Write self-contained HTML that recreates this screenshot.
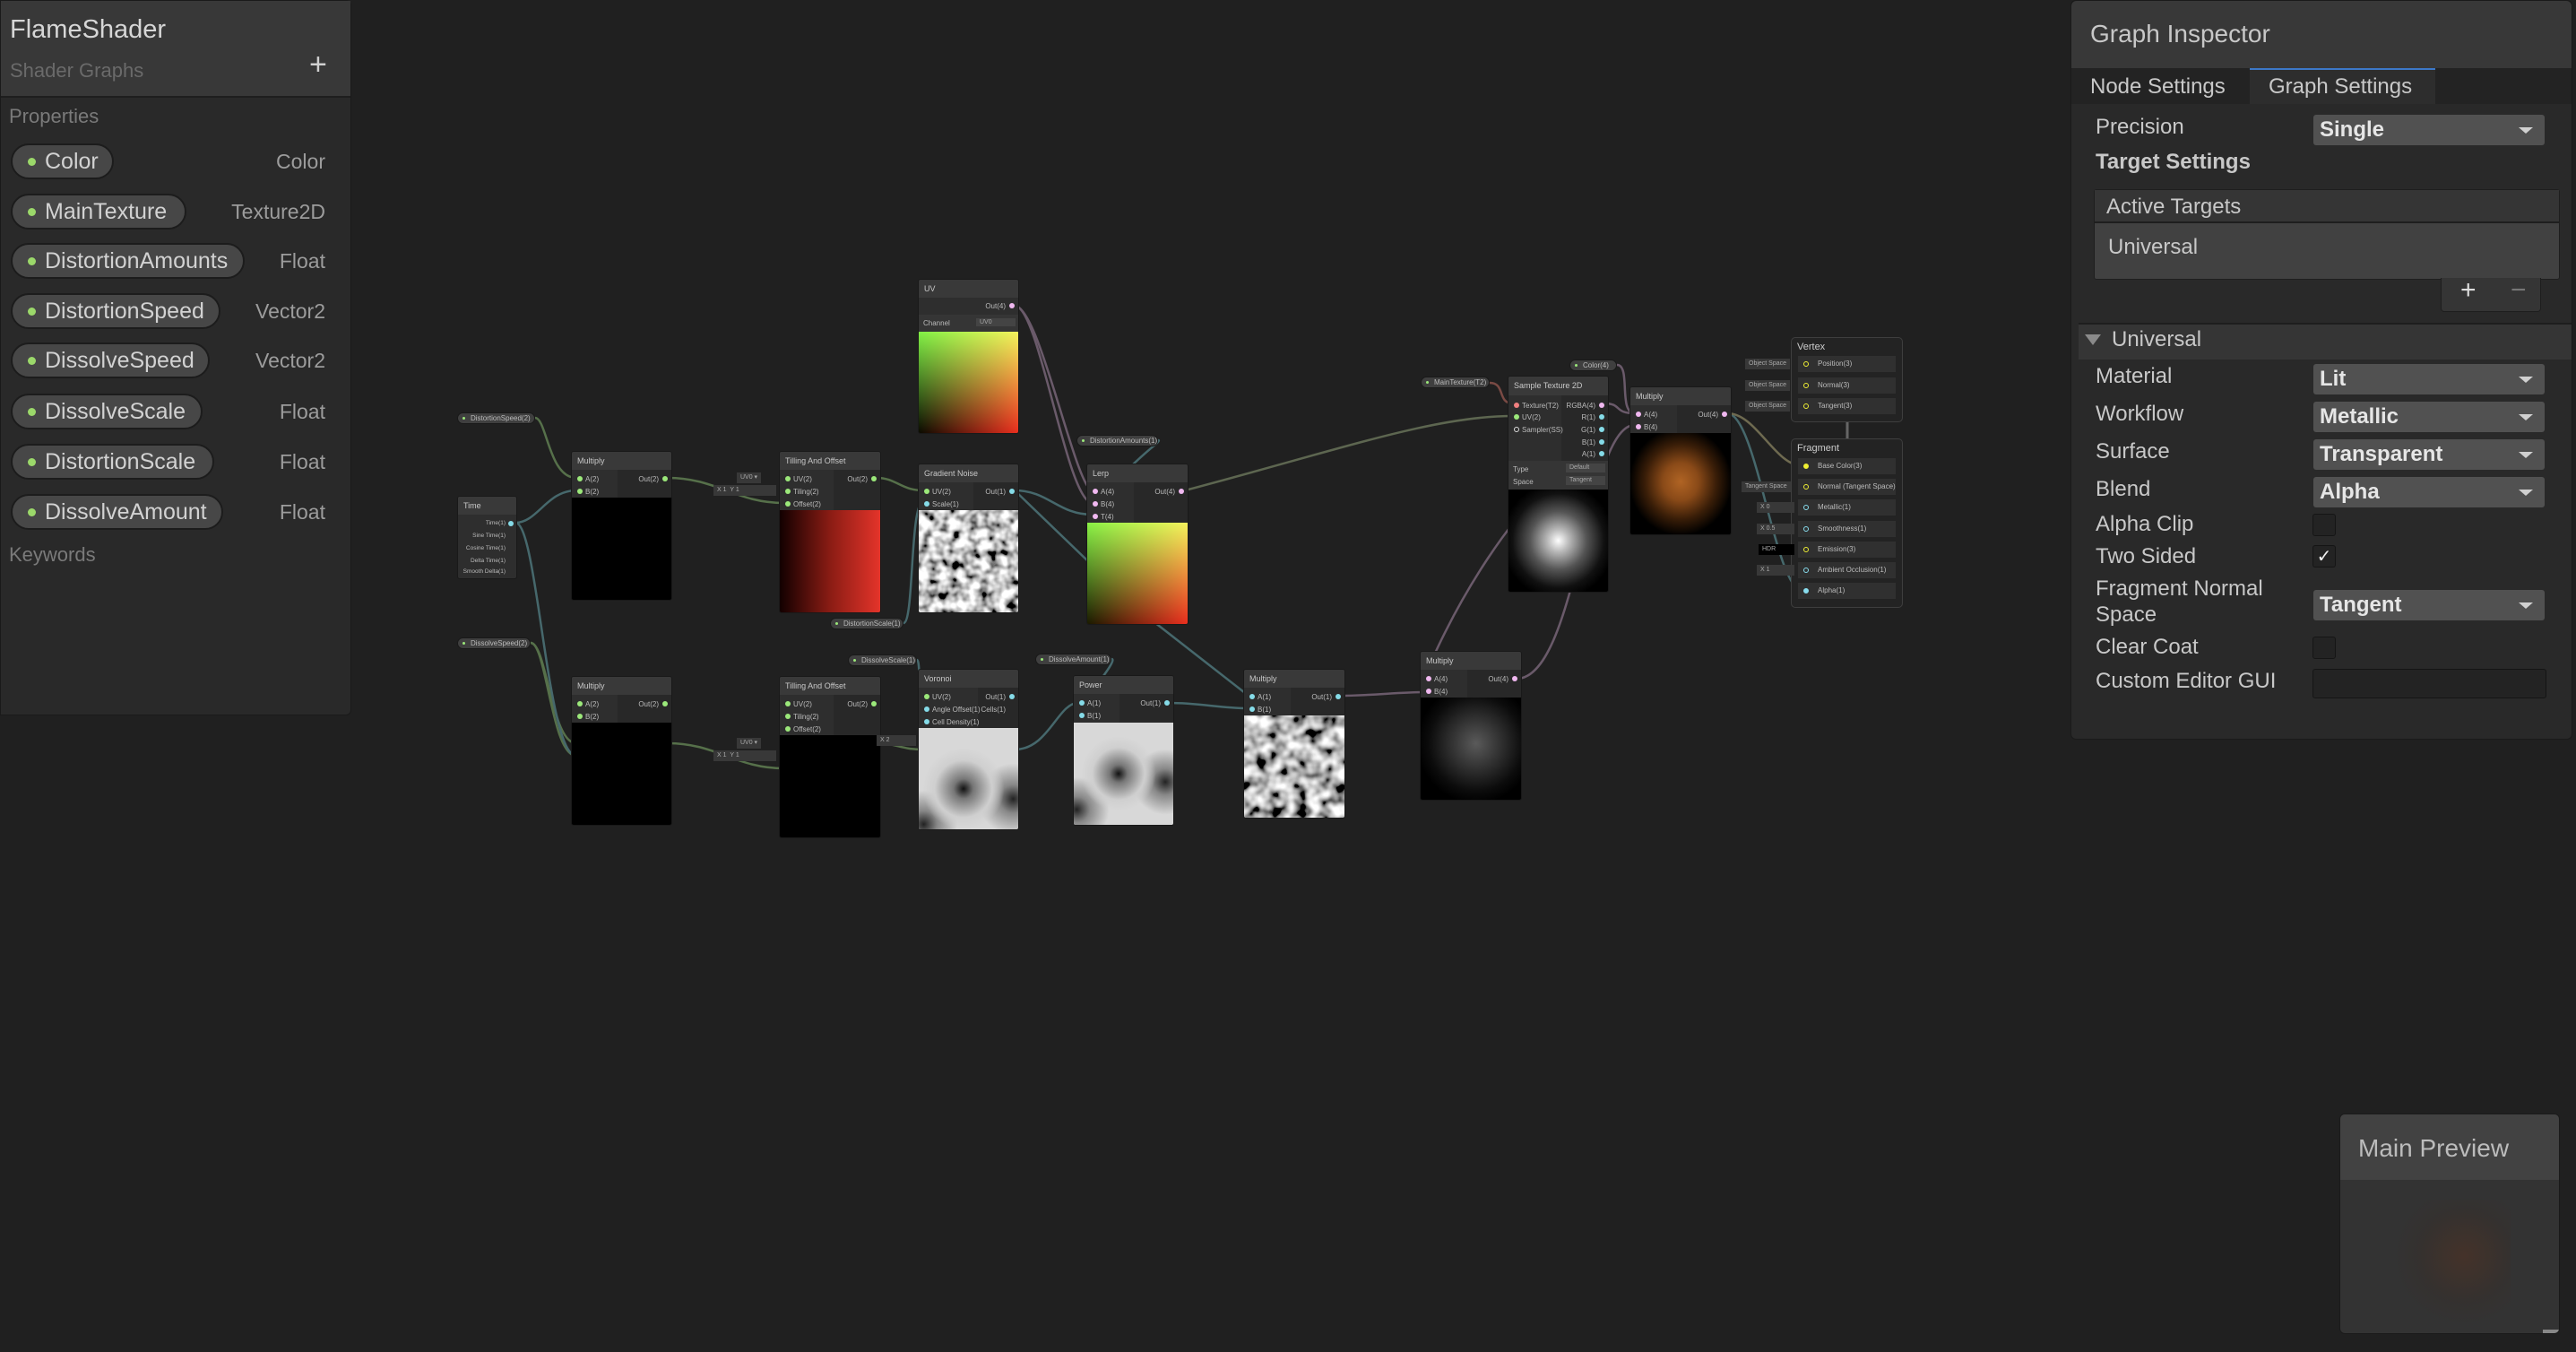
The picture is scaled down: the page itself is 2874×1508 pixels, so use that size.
<!DOCTYPE html>
<html><head><meta charset="utf-8">
<style>
*{margin:0;padding:0;box-sizing:border-box}
body{width:2874px;height:1508px;background:#202020;font-family:"Liberation Sans",sans-serif;position:relative;overflow:hidden;color:#c4c4c4}
.a{position:absolute}
#lp{left:0;top:0;width:392px;height:798px;background:#292929;border:1px solid #1a1a1a;border-radius:0 6px 6px 0}
#lp .hd{left:0;top:0;width:390px;height:108px;background:#383838;border-bottom:2px solid #1e1e1e}
.pill{position:absolute;left:11px;height:40px;border-radius:20px;background:#474747;border:2px solid #1c1c1c;font-size:25px;color:#d2d2d2;line-height:36px;padding-left:36px}
.pill:before{content:"";position:absolute;left:17px;top:14px;width:9px;height:9px;border-radius:50%;background:#9bd86a}
.ty{position:absolute;right:28px;font-size:23px;color:#9c9c9c;line-height:40px}
#rp{left:2310px;top:0;width:560px;height:825px;background:#292929;border:1px solid #1a1a1a;border-radius:6px}
.lbl{position:absolute;left:27px;font-size:24px;color:#c8c8c8}
.dd{position:absolute;left:270px;width:258px;height:34px;background:#515151;border-radius:3px;font-size:24px;font-weight:bold;color:#e6e6e6;padding-left:7px;line-height:34px}
.dd:after{content:"";position:absolute;right:13px;top:14px;border-left:8px solid transparent;border-right:8px solid transparent;border-top:7px solid #d0d0d0}
.cb{position:absolute;left:269px;width:26px;height:25px;background:#232323;border:1px solid #151515;border-radius:3px}
.n{position:absolute;background:#2e2e2e;border:1px solid #191919;border-radius:3px;overflow:hidden;font-size:8px;color:#bdbdbd}
.n .h{position:absolute;left:0;top:0;right:0;background:#393939;padding:5px 0 0 6px;font-size:9px;color:#c8c8c8}
.n .pr{position:absolute;right:0;background:#282828}
.n .pv{position:absolute;left:0;right:0;bottom:0;background:#000}
.pt{position:absolute;font-size:8px;color:#bbb;white-space:nowrap}
.d{position:absolute;width:6px;height:6px;border-radius:50%}
.g{background:#9be87a}.b{background:#85dbe8}.p{background:#f0b8f0}.r{background:#f08080}.y{background:#f2f07a}
.gp{position:absolute;height:13px;border-radius:7px;background:#3f3f3f;border:1px solid #191919;font-size:8px;color:#bbb;line-height:11px;padding-left:14px;white-space:nowrap}
.gp:before{content:"";position:absolute;left:5px;top:4px;width:3px;height:3px;border-radius:50%;background:#9be87a}
.mb{position:absolute;border:1px solid #3e3e3e;border-radius:5px;background:#232323}
.row{position:absolute;left:7px;width:109px;height:18px;background:#303030;font-size:8px;color:#bbb;padding-left:22px;line-height:18px}
.row i{position:absolute;left:6px;top:6px;width:6px;height:6px;border-radius:50%;border:1.5px solid #ee3}
.chip{position:absolute;height:12px;background:#383838;font-size:7px;color:#aaa;line-height:12px;padding:0 4px;white-space:nowrap}
</style></head><body>

<div id="lp" class="a">
<div class="a hd"></div>
<div class="a" style="left:10px;top:16px;font-size:29px;color:#d6d6d6">FlameShader</div>
<div class="a" style="left:10px;top:65px;font-size:22px;color:#6a6a6a">Shader Graphs</div>
<div class="a" style="left:344px;top:52px;font-size:34px;color:#d0d0d0">+</div>
<div class="a" style="left:9px;top:116px;font-size:22px;color:#7a7a7a">Properties</div>
<div class="pill" style="top:159px;width:115px">Color</div><div class="ty" style="top:159px">Color</div>
<div class="pill" style="top:215px;width:196px">MainTexture</div><div class="ty" style="top:215px">Texture2D</div>
<div class="pill" style="top:270px;width:261px">DistortionAmounts</div><div class="ty" style="top:270px">Float</div>
<div class="pill" style="top:326px;width:234px">DistortionSpeed</div><div class="ty" style="top:326px">Vector2</div>
<div class="pill" style="top:381px;width:222px">DissolveSpeed</div><div class="ty" style="top:381px">Vector2</div>
<div class="pill" style="top:438px;width:214px">DissolveScale</div><div class="ty" style="top:438px">Float</div>
<div class="pill" style="top:494px;width:227px">DistortionScale</div><div class="ty" style="top:494px">Float</div>
<div class="pill" style="top:550px;width:237px">DissolveAmount</div><div class="ty" style="top:550px">Float</div>
<div class="a" style="left:9px;top:605px;font-size:22px;color:#7a7a7a">Keywords</div>
</div>

<div id="rp" class="a">
<div class="a" style="left:0;top:0;width:558px;height:75px;background:#383838;border-radius:6px 6px 0 0"></div>
<div class="a" style="left:21px;top:21px;font-size:28px;color:#c8c8c8">Graph Inspector</div>
<div class="a" style="left:0;top:75px;width:558px;height:40px;background:#232323"></div>
<div class="a" style="left:199px;top:75px;width:207px;height:40px;background:#2d2d2d;border-top:2px solid #3c78c8"></div>
<div class="a" style="left:21px;top:82px;font-size:24px;color:#c8c8c8">Node Settings</div>
<div class="a" style="left:220px;top:82px;font-size:24px;color:#c8c8c8">Graph Settings</div>
<div class="lbl" style="top:127px">Precision</div><div class="dd" style="top:127px">Single</div>
<div class="lbl" style="top:166px;font-weight:bold">Target Settings</div>
<div class="a" style="left:25px;top:210px;width:520px;height:101px;background:#414141;border:1px solid #1e1e1e;border-radius:3px"></div>
<div class="a" style="left:26px;top:211px;width:518px;height:37px;background:#353535;border-bottom:2px solid #1e1e1e"></div>
<div class="a" style="left:39px;top:216px;font-size:24px;color:#c8c8c8">Active Targets</div>
<div class="a" style="left:41px;top:261px;font-size:24px;color:#c8c8c8">Universal</div>
<div class="a" style="left:412px;top:309px;width:112px;height:38px;background:#353535;border:1px solid #1e1e1e;border-top:none;border-radius:0 0 4px 4px"></div>
<div class="a" style="left:434px;top:306px;font-size:30px;color:#ddd">+</div>
<div class="a" style="left:490px;top:306px;font-size:30px;color:#777">−</div>
<div class="a" style="left:8px;top:359px;width:550px;height:41px;background:#353535;border-top:2px solid #1e1e1e"></div>
<div class="a" style="left:15px;top:372px;border-left:9px solid transparent;border-right:9px solid transparent;border-top:12px solid #8a8a8a"></div>
<div class="a" style="left:45px;top:364px;font-size:24px;color:#c8c8c8">Universal</div>
<div class="lbl" style="top:405px">Material</div><div class="dd" style="top:405px">Lit</div>
<div class="lbl" style="top:447px">Workflow</div><div class="dd" style="top:447px">Metallic</div>
<div class="lbl" style="top:489px">Surface</div><div class="dd" style="top:489px">Transparent</div>
<div class="lbl" style="top:531px">Blend</div><div class="dd" style="top:531px">Alpha</div>
<div class="lbl" style="top:570px">Alpha Clip</div><div class="cb" style="top:572px"></div>
<div class="lbl" style="top:606px">Two Sided</div><div class="cb" style="top:607px;color:#eee;font-size:20px;text-align:center;line-height:24px">✓</div>
<div class="lbl" style="top:641px;line-height:29px">Fragment Normal<br>Space</div><div class="dd" style="top:657px">Tangent</div>
<div class="lbl" style="top:707px">Clear Coat</div><div class="cb" style="top:709px"></div>
<div class="lbl" style="top:745px">Custom Editor GUI</div>
<div class="a" style="left:269px;top:745px;width:261px;height:33px;background:#232323;border:1px solid #151515;border-radius:3px"></div>
</div>

<div class="a" style="left:2610px;top:1242px;width:246px;height:246px;background:#333;border:1px solid #1a1a1a;border-radius:6px;overflow:hidden">
<div class="a" style="left:0;top:0;width:246px;height:73px;background:#424242"></div>
<div class="a" style="left:20px;top:22px;font-size:28px;color:#bcbcbc">Main Preview</div>
<div class="a" style="left:60px;top:95px;width:130px;height:140px;background:radial-gradient(ellipse at 60% 45%,rgba(90,50,30,.45),rgba(60,40,30,.2) 45%,rgba(51,51,51,0) 70%)"></div>
<div class="a" style="left:226px;top:240px;width:20px;height:5px;background:#888"></div>
</div>

<svg class="a" style="left:0;top:0" width="2874" height="1508" fill="none" stroke-width="2.5">
<defs>
<filter id="gn" x="0" y="0" width="100%" height="100%"><feTurbulence type="fractalNoise" baseFrequency="0.09" numOctaves="2" seed="3"/><feColorMatrix type="matrix" values="2.6 0 0 0 -0.75 2.6 0 0 0 -0.75 2.6 0 0 0 -0.75 0 0 0 0 1"/></filter>
<filter id="gn2" x="0" y="0" width="100%" height="100%"><feTurbulence type="fractalNoise" baseFrequency="0.07" numOctaves="2" seed="8"/><feColorMatrix type="matrix" values="2.3 0 0 0 -0.65 2.3 0 0 0 -0.65 2.3 0 0 0 -0.65 0 0 0 0 1"/></filter>
</defs>
<g stroke="#56704a">
<path d="M597 466 C610 466,612 533,643 533"/>
<path d="M592 717 C610 717,615 829,643 829"/>
<path d="M592 717 C610 717,615 843,643 843"/>
<path d="M745 533 C800 533,820 561,875 561"/>
<path d="M978 533 C1000 533,1005 547,1030 547"/>
<path d="M745 829 C800 829,820 857,875 857"/>
<path d="M978 829 C1000 829,1005 836,1030 836"/>
<path d="M1322 547 C1500 500,1600 464,1688 464" stroke="#5d6650"/>
</g>
<g stroke="#46686c">
<path d="M575 583 C600 583,610 547,643 547"/>
<path d="M575 583 C600 583,610 843,643 843"/>
<path d="M1008 695 C1020 695,1015 560,1030 560"/>
<path d="M1023 736 C1030 736,1020 864,1030 864"/>
<path d="M1132 547 C1170 547,1180 574,1219 574"/>
<path d="M1132 547 L1270 680 L1393 776"/>
<path d="M1292 491 C1300 491,1250 520,1219 574"/>
<path d="M1132 836 C1170 836,1180 784,1203 784"/>
<path d="M1240 735 C1250 735,1200 790,1203 798"/>
<path d="M1304 784 C1340 784,1360 790,1393 790"/>
<path d="M1927 461 C1960 461,1980 660,2012 660"/>
</g>
<g stroke="#6a5a6a">
<path d="M1132 341 C1160 341,1200 547,1219 547"/>
<path d="M1132 341 C1160 341,1190 561,1219 561"/>
<path d="M1494 776 C1530 776,1560 772,1590 772"/>
<path d="M1790 450 C1810 450,1800 461,1824 461"/>
<path d="M1804 407 C1820 407,1805 461,1824 461"/>
<path d="M1692 757 C1760 757,1770 474,1824 474"/>
<path d="M1790 505 C1700 520,1600 720,1590 757"/>
<path d="M1927 461 C1960 461,1980 520,2012 520" stroke="#6e6a50"/>
</g>
<path d="M1662 427 C1680 427,1670 450,1688 450" stroke="#7a4a44"/>
<path d="M2061 471 L2061 489" stroke="#666" stroke-width="3"/>
</svg>

<div class="gp" style="left:510px;top:460px;width:87px">DistortionSpeed(2)</div>
<div class="gp" style="left:510px;top:711px;width:82px">DissolveSpeed(2)</div>
<div class="gp" style="left:926px;top:689px;width:82px">DistortionScale(1)</div>
<div class="gp" style="left:946px;top:730px;width:77px">DissolveScale(1)</div>
<div class="gp" style="left:1155px;top:729px;width:85px">DissolveAmount(1)</div>
<div class="gp" style="left:1201px;top:485px;width:91px">DistortionAmounts(1)</div>
<div class="gp" style="left:1585px;top:420px;width:77px">MainTexture(T2)</div>
<div class="gp" style="left:1751px;top:401px;width:53px">Color(4)</div>

<div class="n" style="left:510px;top:553px;width:67px;height:93px"><div class="h" style="height:20px">Time</div>
<div class="pt" style="right:12px;top:26px;font-size:6.5px">Time(1)</div><div class="pt" style="right:12px;top:40px;font-size:6.5px">Sine Time(1)</div><div class="pt" style="right:12px;top:54px;font-size:6.5px">Cosine Time(1)</div><div class="pt" style="right:12px;top:68px;font-size:6.5px">Delta Time(1)</div><div class="pt" style="right:12px;top:80px;font-size:6.5px">Smooth Delta(1)</div>
<div class="d b" style="right:3px;top:27px"></div></div>

<div class="n" style="left:637px;top:503px;width:113px;height:167px"><div class="h" style="height:20px">Multiply</div><div class="pr" style="top:20px;height:33px;width:60px"></div>
<div class="d g" style="left:6px;top:27px"></div><div class="pt" style="left:15px;top:26px">A(2)</div><div class="d g" style="left:6px;top:41px"></div><div class="pt" style="left:15px;top:40px">B(2)</div><div class="pt" style="right:14px;top:26px">Out(2)</div><div class="d g" style="right:4px;top:27px"></div>
<div class="pv" style="height:114px"></div></div>
<div class="n" style="left:637px;top:754px;width:113px;height:167px"><div class="h" style="height:20px">Multiply</div><div class="pr" style="top:20px;height:33px;width:60px"></div>
<div class="d g" style="left:6px;top:27px"></div><div class="pt" style="left:15px;top:26px">A(2)</div><div class="d g" style="left:6px;top:41px"></div><div class="pt" style="left:15px;top:40px">B(2)</div><div class="pt" style="right:14px;top:26px">Out(2)</div><div class="d g" style="right:4px;top:27px"></div>
<div class="pv" style="height:114px"></div></div>

<div class="chip" style="left:822px;top:527px">UV0 ▾</div><div class="chip" style="left:796px;top:541px;width:70px">X 1 &nbsp;Y 1</div>
<div class="n" style="left:869px;top:503px;width:114px;height:181px"><div class="h" style="height:20px">Tilling And Offset</div><div class="pr" style="top:20px;height:46px;width:52px"></div>
<div class="d g" style="left:6px;top:27px"></div><div class="pt" style="left:15px;top:26px">UV(2)</div><div class="d g" style="left:6px;top:41px"></div><div class="pt" style="left:15px;top:40px">Tiling(2)</div><div class="d g" style="left:6px;top:55px"></div><div class="pt" style="left:15px;top:54px">Offset(2)</div><div class="pt" style="right:14px;top:26px">Out(2)</div><div class="d g" style="right:4px;top:27px"></div>
<div class="pv" style="height:114px;background:linear-gradient(to right,#120000,#8a1c14 50%,#e4342a)"></div></div>
<div class="chip" style="left:822px;top:823px">UV0 ▾</div><div class="chip" style="left:796px;top:837px;width:70px">X 1 &nbsp;Y 1</div>
<div class="n" style="left:869px;top:754px;width:114px;height:181px"><div class="h" style="height:20px">Tilling And Offset</div><div class="pr" style="top:20px;height:46px;width:52px"></div>
<div class="d g" style="left:6px;top:27px"></div><div class="pt" style="left:15px;top:26px">UV(2)</div><div class="d g" style="left:6px;top:41px"></div><div class="pt" style="left:15px;top:40px">Tiling(2)</div><div class="d g" style="left:6px;top:55px"></div><div class="pt" style="left:15px;top:54px">Offset(2)</div><div class="pt" style="right:14px;top:26px">Out(2)</div><div class="d g" style="right:4px;top:27px"></div>
<div class="pv" style="height:114px"></div></div>

<div class="n" style="left:1024px;top:311px;width:113px;height:173px"><div class="h" style="height:20px">UV</div>
<div class="pt" style="right:14px;top:25px">Out(4)</div><div class="d p" style="right:4px;top:26px"></div>
<div class="a" style="left:0;top:39px;width:113px;height:20px;background:#353535"></div><div class="pt" style="left:5px;top:44px">Channel</div><div class="chip" style="left:64px;top:43px;width:44px;height:9px;line-height:9px;background:#444">UV0</div>
<div class="pv" style="height:113px;background:linear-gradient(to bottom,#7cf046,rgba(0,0,0,0)),linear-gradient(to right,#0a0a00,#ea2e1e);background-blend-mode:screen"></div></div>
<div class="n" style="left:1024px;top:517px;width:113px;height:167px"><div class="h" style="height:20px">Gradient Noise</div><div class="pr" style="top:20px;height:33px;width:50px"></div>
<div class="d g" style="left:6px;top:27px"></div><div class="pt" style="left:15px;top:26px">UV(2)</div><div class="d b" style="left:6px;top:41px"></div><div class="pt" style="left:15px;top:40px">Scale(1)</div><div class="pt" style="right:14px;top:26px">Out(1)</div><div class="d b" style="right:4px;top:27px"></div>
<svg class="a" style="left:0;bottom:0" width="113" height="114"><rect width="113" height="114" filter="url(#gn)"/></svg></div>
<div class="n" style="left:1024px;top:746px;width:113px;height:180px"><div class="h" style="height:20px">Voronoi</div><div class="pr" style="top:20px;height:46px;width:45px"></div>
<div class="d g" style="left:6px;top:27px"></div><div class="pt" style="left:15px;top:26px">UV(2)</div><div class="d b" style="left:6px;top:41px"></div><div class="pt" style="left:15px;top:40px">Angle Offset(1)</div><div class="d b" style="left:6px;top:55px"></div><div class="pt" style="left:15px;top:54px">Cell Density(1)</div><div class="pt" style="right:14px;top:26px">Out(1)</div><div class="d b" style="right:4px;top:27px"></div><div class="pt" style="right:14px;top:40px">Cells(1)</div>
<div class="pv" style="height:113px;background:radial-gradient(circle at 45% 60%,#111 0,#777 12%,#cfcfcf 35%,rgba(220,220,220,0) 50%),radial-gradient(circle at 95% 70%,#222 0,#888 12%,rgba(200,200,200,0) 30%),radial-gradient(circle at 5% 95%,#222,#888 10%,rgba(200,200,200,0) 25%),#d8d8d8"></div></div>
<div class="chip" style="left:978px;top:820px;width:44px">X 2</div>

<div class="n" style="left:1212px;top:517px;width:114px;height:180px"><div class="h" style="height:20px">Lerp</div><div class="pr" style="top:20px;height:46px;width:60px"></div>
<div class="d p" style="left:6px;top:27px"></div><div class="pt" style="left:15px;top:26px">A(4)</div><div class="d p" style="left:6px;top:41px"></div><div class="pt" style="left:15px;top:40px">B(4)</div><div class="d p" style="left:6px;top:55px"></div><div class="pt" style="left:15px;top:54px">T(4)</div><div class="pt" style="right:14px;top:26px">Out(4)</div><div class="d p" style="right:4px;top:27px"></div>
<div class="pv" style="height:113px;background:linear-gradient(to bottom,#7cf046,rgba(0,0,0,0)),linear-gradient(to right,#1a1a00,#ea2e1e);background-blend-mode:screen"></div></div>

<div class="n" style="left:1197px;top:753px;width:113px;height:168px"><div class="h" style="height:20px">Power</div><div class="pr" style="top:20px;height:33px;width:60px"></div>
<div class="d b" style="left:6px;top:27px"></div><div class="pt" style="left:15px;top:26px">A(1)</div><div class="d b" style="left:6px;top:41px"></div><div class="pt" style="left:15px;top:40px">B(1)</div><div class="pt" style="right:14px;top:26px">Out(1)</div><div class="d b" style="right:4px;top:27px"></div>
<div class="pv" style="height:114px;background:radial-gradient(circle at 45% 50%,#111 0,#777 12%,#cfcfcf 35%,rgba(220,220,220,0) 50%),radial-gradient(circle at 92% 58%,#222 0,#888 12%,rgba(200,200,200,0) 30%),radial-gradient(circle at 3% 85%,#222,#888 10%,rgba(200,200,200,0) 25%),#d8d8d8"></div></div>
<div class="n" style="left:1387px;top:746px;width:114px;height:167px"><div class="h" style="height:20px">Multiply</div><div class="pr" style="top:20px;height:33px;width:60px"></div>
<div class="d b" style="left:6px;top:27px"></div><div class="pt" style="left:15px;top:26px">A(1)</div><div class="d b" style="left:6px;top:41px"></div><div class="pt" style="left:15px;top:40px">B(1)</div><div class="pt" style="right:14px;top:26px">Out(1)</div><div class="d b" style="right:4px;top:27px"></div>
<svg class="a" style="left:0;bottom:0" width="114" height="114"><rect width="114" height="114" filter="url(#gn2)"/></svg></div>
<div class="n" style="left:1584px;top:726px;width:114px;height:167px"><div class="h" style="height:20px">Multiply</div><div class="pr" style="top:20px;height:33px;width:60px"></div>
<div class="d p" style="left:6px;top:27px"></div><div class="pt" style="left:15px;top:26px">A(4)</div><div class="d p" style="left:6px;top:41px"></div><div class="pt" style="left:15px;top:40px">B(4)</div><div class="pt" style="right:14px;top:26px">Out(4)</div><div class="d p" style="right:4px;top:27px"></div>
<div class="pv" style="height:114px;background:radial-gradient(ellipse at 55% 45%,#5a5a5a 0,#333 30%,#0c0c0c 60%,#000 75%)"></div></div>

<div class="n" style="left:1682px;top:419px;width:113px;height:242px"><div class="h" style="height:21px">Sample Texture 2D</div><div class="pr" style="top:21px;height:73px;width:52px"></div>
<div class="d r" style="left:6px;top:29px"></div><div class="pt" style="left:15px;top:28px">Texture(T2)</div><div class="d g" style="left:6px;top:42px"></div><div class="pt" style="left:15px;top:41px">UV(2)</div><div class="d" style="left:6px;top:56px;border:1px solid #ddd"></div><div class="pt" style="left:15px;top:55px">Sampler(SS)</div>
<div class="pt" style="right:14px;top:28px">RGBA(4)</div><div class="pt" style="right:14px;top:41px">R(1)</div><div class="pt" style="right:14px;top:55px">G(1)</div><div class="pt" style="right:14px;top:69px">B(1)</div><div class="pt" style="right:14px;top:82px">A(1)</div>
<div class="d p" style="right:4px;top:29px"></div><div class="d b" style="right:4px;top:42px"></div><div class="d b" style="right:4px;top:56px"></div><div class="d b" style="right:4px;top:70px"></div><div class="d b" style="right:4px;top:83px"></div>
<div class="a" style="left:0;top:94px;width:113px;height:34px;background:#353535"></div>
<div class="pt" style="left:5px;top:99px">Type</div><div class="chip" style="left:64px;top:97px;width:44px;height:10px;line-height:10px;background:#444">Default</div>
<div class="pt" style="left:5px;top:113px">Space</div><div class="chip" style="left:64px;top:111px;width:44px;height:10px;line-height:10px;background:#444">Tangent</div>
<div class="pv" style="height:114px;background:radial-gradient(ellipse at 50% 50%,#fff 0,#bbb 15%,#555 40%,#111 65%,#000 80%)"></div></div>

<div class="n" style="left:1818px;top:431px;width:114px;height:166px"><div class="h" style="height:20px">Multiply</div><div class="pr" style="top:20px;height:33px;width:60px"></div>
<div class="d p" style="left:6px;top:27px"></div><div class="pt" style="left:15px;top:26px">A(4)</div><div class="d p" style="left:6px;top:41px"></div><div class="pt" style="left:15px;top:40px">B(4)</div><div class="pt" style="right:14px;top:26px">Out(4)</div><div class="d p" style="right:4px;top:27px"></div>
<div class="pv" style="height:113px;background:radial-gradient(ellipse at 50% 48%,#b06424 0,#8a4a18 25%,#3a1e08 50%,#000 72%)"></div></div>

<div class="mb" style="left:1998px;top:376px;width:125px;height:95px"></div>
<div class="a" style="left:2005px;top:381px;font-size:11px;color:#ccc">Vertex</div>
<div class="row" style="left:2006px;top:397px"><i></i>Position(3)</div>
<div class="row" style="left:2006px;top:421px"><i></i>Normal(3)</div>
<div class="row" style="left:2006px;top:444px"><i></i>Tangent(3)</div>
<div class="chip" style="left:1947px;top:400px">Object Space</div>
<div class="chip" style="left:1947px;top:424px">Object Space</div>
<div class="chip" style="left:1947px;top:447px">Object Space</div>
<div class="mb" style="left:1998px;top:489px;width:125px;height:189px"></div>
<div class="a" style="left:2005px;top:494px;font-size:11px;color:#ccc">Fragment</div>
<div class="row" style="left:2006px;top:511px"><i style="background:#ee3"></i>Base Color(3)</div>
<div class="row" style="left:2006px;top:534px"><i></i>Normal (Tangent Space)(3)</div>
<div class="row" style="left:2006px;top:557px"><i style="border-color:#8de"></i>Metallic(1)</div>
<div class="row" style="left:2006px;top:581px"><i style="border-color:#8de"></i>Smoothness(1)</div>
<div class="row" style="left:2006px;top:604px"><i></i>Emission(3)</div>
<div class="row" style="left:2006px;top:627px"><i style="border-color:#8de"></i>Ambient Occlusion(1)</div>
<div class="row" style="left:2006px;top:650px"><i style="background:#8de;border-color:#8de"></i>Alpha(1)</div>
<div class="chip" style="left:1943px;top:537px">Tangent Space</div>
<div class="chip" style="left:1960px;top:560px;width:42px">X 0</div>
<div class="chip" style="left:1960px;top:584px;width:42px">X 0.5</div>
<div class="chip" style="left:1962px;top:607px;width:40px;background:#000">HDR</div>
<div class="chip" style="left:1960px;top:630px;width:42px">X 1</div>
</body></html>
